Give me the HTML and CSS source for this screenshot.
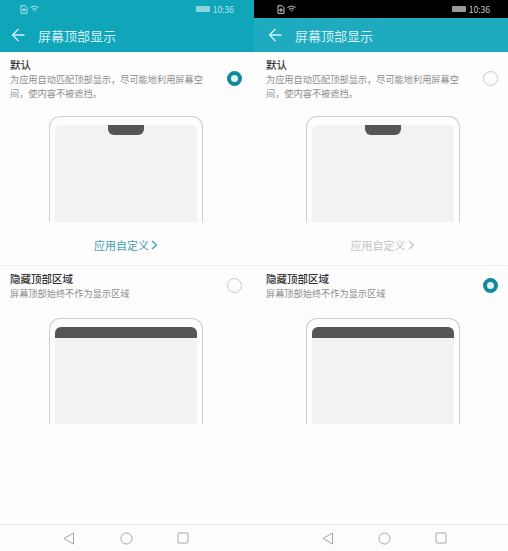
FILE: index.html
```html
<!DOCTYPE html>
<html lang="zh">

<head>
    <meta charset="utf-8">
    <title>屏幕顶部显示</title>
    <link rel="stylesheet" href="styles.css">
</head>

<body>
    <main class="pair">

        <section class="screen">
            <div class="status">
                <div class="status-left">
                    <svg width="8" height="9" viewBox="0 0 8 9"><path d="M1 .7h4l2 2v5.600H1zM3 4h2v2H3z" fill="none" stroke="currentColor"/></svg>
                    <svg width="9" height="8" viewBox="0 0 9 8"><path d="M.5 2.500Q4.500-.5 8.500 2.500M2 4.300Q4.500 2.300 7 4.300M3.500 6Q4.500 5.300 5.500 6" fill="none" stroke="currentColor"/></svg>
                </div>
                <div class="status-right"><span class="battery"></span>10:36</div>
            </div>
            <header class="toolbar">
                <svg width="14" height="14" viewBox="0 0 14 14"><path d="M13.500 7H1.500M7.500 1 1.500 7l6 6" fill="none" stroke="currentColor" stroke-width="1.300"/></svg>
                <h1>屏幕顶部显示</h1>
            </header>
            <div class="option first">
                <div class="option-head">
                    <div>
                        <h2>默认</h2>
                        <p>为应用自动匹配顶部显示，尽可能地利用屏幕空间，使内容不被遮挡。</p>
                    </div>
                    <span class="radio on"></span>
                </div>
                <div class="phone"><div class="phone-inner"><span class="notch"></span></div></div>
                <div class="custom">应用自定义
                    <svg width="7" height="10" viewBox="0 0 7 10"><path d="M1 1l4.500 4L1 9" fill="none" stroke="currentColor" stroke-width="1.300"/></svg>
                </div>
            </div>
            <div class="option second">
                <div class="option-head">
                    <div>
                        <h2>隐藏顶部区域</h2>
                        <p>屏幕顶部始终不作为显示区域</p>
                    </div>
                    <span class="radio"></span>
                </div>
                <div class="phone"><div class="phone-inner"><span class="topbar"></span></div></div>
            </div>
            <nav class="navbar">
                <svg width="12" height="13" viewBox="0 0 12 13"><path d="M10.500 1v11L1 6.500z" fill="none" stroke="currentColor" stroke-linejoin="round"/></svg>
                <svg width="13" height="13" viewBox="0 0 13 13"><circle cx="6.500" cy="6.500" r="5.500" fill="none" stroke="currentColor"/></svg>
                <svg width="12" height="12" viewBox="0 0 12 12"><rect x="1" y="1" width="10" height="10" rx="1" fill="none" stroke="currentColor"/></svg>
            </nav>
        </section>

        <section class="screen hidden-top">
            <div class="status">
                <div class="status-left">
                    <svg width="8" height="9" viewBox="0 0 8 9"><path d="M1 .7h4l2 2v5.600H1zM3 4h2v2H3z" fill="none" stroke="currentColor"/></svg>
                    <svg width="9" height="8" viewBox="0 0 9 8"><path d="M.5 2.500Q4.500-.5 8.500 2.500M2 4.300Q4.500 2.300 7 4.300M3.500 6Q4.500 5.300 5.500 6" fill="none" stroke="currentColor"/></svg>
                </div>
                <div class="status-right"><span class="battery"></span>10:36</div>
            </div>
            <header class="toolbar">
                <svg width="14" height="14" viewBox="0 0 14 14"><path d="M13.500 7H1.500M7.500 1 1.500 7l6 6" fill="none" stroke="currentColor" stroke-width="1.300"/></svg>
                <h1>屏幕顶部显示</h1>
            </header>
            <div class="option first">
                <div class="option-head">
                    <div>
                        <h2>默认</h2>
                        <p>为应用自动匹配顶部显示，尽可能地利用屏幕空间，使内容不被遮挡。</p>
                    </div>
                    <span class="radio"></span>
                </div>
                <div class="phone"><div class="phone-inner"><span class="notch"></span></div></div>
                <div class="custom off">应用自定义
                    <svg width="7" height="10" viewBox="0 0 7 10"><path d="M1 1l4.500 4L1 9" fill="none" stroke="currentColor" stroke-width="1.300"/></svg>
                </div>
            </div>
            <div class="option second">
                <div class="option-head">
                    <div>
                        <h2>隐藏顶部区域</h2>
                        <p>屏幕顶部始终不作为显示区域</p>
                    </div>
                    <span class="radio on"></span>
                </div>
                <div class="phone"><div class="phone-inner"><span class="topbar"></span></div></div>
            </div>
            <nav class="navbar">
                <svg width="12" height="13" viewBox="0 0 12 13"><path d="M10.500 1v11L1 6.500z" fill="none" stroke="currentColor" stroke-linejoin="round"/></svg>
                <svg width="13" height="13" viewBox="0 0 13 13"><circle cx="6.500" cy="6.500" r="5.500" fill="none" stroke="currentColor"/></svg>
                <svg width="12" height="12" viewBox="0 0 12 12"><rect x="1" y="1" width="10" height="10" rx="1" fill="none" stroke="currentColor"/></svg>
            </nav>
        </section>

    </main>
</body>

</html>
```

FILE: styles.css
```css
html, body {
    margin: 0;
    height: 551px;
    overflow: hidden;
    background: #fdfdfd;
    font-family: "Noto Sans CJK SC", "Noto Sans", sans-serif;
}

.pair {
    display: flex;
    height: 551px;
}

.screen {
    width: 254px;
    display: flex;
    flex-direction: column;
    background: #fdfdfd;
}

.status {
    height: 18px;
    padding: 0 20px;
    display: flex;
    justify-content: space-between;
    align-items: center;
    background: #0fa6ba;
    color: #b5e2e8;
    font-size: 8.500px;
}

.status-left, .status-right {
    display: flex;
    align-items: center;
    gap: 2px;
}

.status-right {
    gap: 3px;
}

.battery {
    width: 14px;
    height: 6px;
    border-radius: 1px;
    background: #8fd3dc;
}

.toolbar {
    height: 34px;
    padding: 0 0 0 11px;
    display: flex;
    align-items: center;
    gap: 13px;
    background: #0fa6ba;
    color: #d5f0f3;
}

.toolbar h1 {
    margin: 0;
    font-size: 13px;
    font-weight: 400;
}

.option-head {
    display: flex;
    justify-content: space-between;
    padding: 5px 12px 0 10px;
}

.option-head > div {
    width: 196px;
}

h2 {
    margin: 0;
    font-size: 10.500px;
    line-height: 15px;
    font-weight: 500;
    color: #333;
}

.option-head p {
    margin: 0;
    font-size: 9.200px;
    line-height: 14px;
    color: #8d8d8d;
}

.radio {
    width: 15px;
    height: 15px;
    margin-top: 14px;
    box-sizing: border-box;
    border: 1px solid #c9c9c9;
    border-radius: 50%;
}

.radio.on {
    border: 4px solid #11899f;
    background: #e6f3f5;
}

.first {
    height: 213px;
    border-bottom: 1px solid #f0f0f0;
}

.second {
    flex: 1;
}

.second .option-head {
    height: 47px;
}

.second .radio {
    margin-top: 7px;
}

.phone {
    width: 154px;
    height: 106px;
    margin-left: 49px;
    box-sizing: border-box;
    padding: 8px 5px 0;
    border: 1px solid #cfcfcf;
    border-bottom: 0;
    border-radius: 11px 11px 0 0;
}

.first .phone {
    margin-top: 16px;
}

.phone-inner {
    height: 100%;
    background: #f2f2f2;
    border-radius: 6px 6px 0 0;
}

.notch {
    display: block;
    width: 36px;
    height: 10px;
    margin: 0 auto;
    background: #555;
    border-radius: 0 0 6px 6px;
}

.topbar {
    display: block;
    height: 11px;
    background: #555;
    border-radius: 6px 6px 0 0;
}

.custom {
    display: flex;
    justify-content: center;
    align-items: center;
    gap: 2px;
    height: 46px;
    padding-right: 2px;
    font-size: 11px;
    color: #3f9fb3;
}

.custom.off {
    padding: 0 0 0 3px;
    color: #c4c4c4;
}

.navbar {
    height: 26px;
    padding: 0 65px 0 63px;
    display: flex;
    justify-content: space-between;
    align-items: center;
    border-top: 1px solid #ececec;
    color: #a5a5a5;
}

.hidden-top .status {
    padding: 0 18px 0 23px;
    background: #000;
    color: #c8c8c8;
}

.hidden-top .battery {
    background: #9a9a9a;
}

.hidden-top .toolbar {
    padding-left: 14px;
    background: #1eabc0;
}

.hidden-top .option-head {
    padding: 5px 10px 0 12px;
}

.hidden-top .phone {
    margin-left: 52px;
}

.hidden-top .navbar {
    padding: 0 61px 0 68px;
}
```
